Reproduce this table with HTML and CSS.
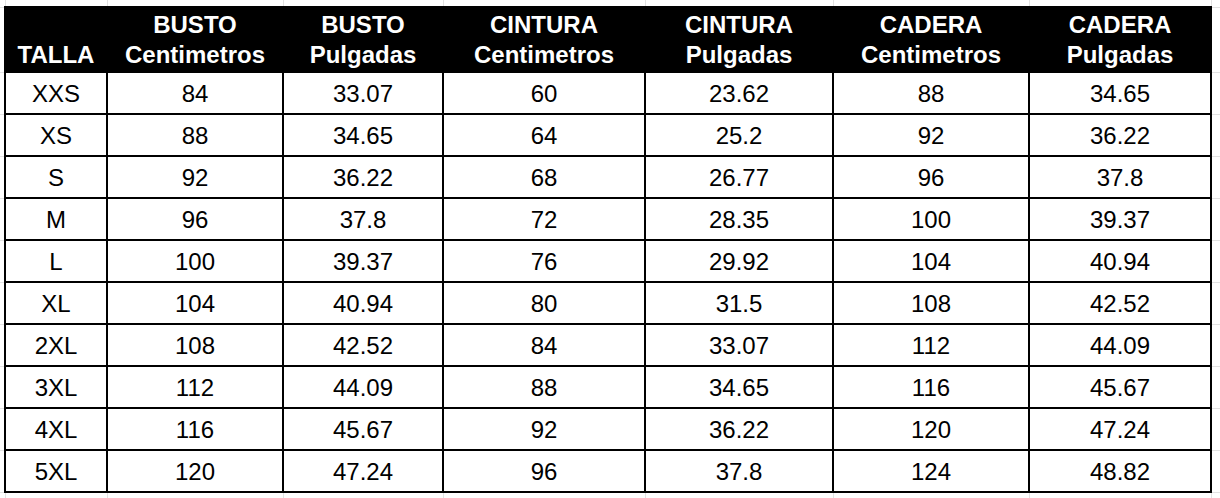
FILE: index.html
```html
<!DOCTYPE html>
<html lang="es">
<head>
<meta charset="utf-8">
<title>Tabla de tallas</title>
<link rel="stylesheet" href="styles.css">
</head>
<body>
<table class="sheet">
  <colgroup>
    <col class="w-gl">
    <col class="w-talla">
    <col class="w-bc">
    <col class="w-bp">
    <col class="w-cc">
    <col class="w-cp">
    <col class="w-hc">
    <col class="w-hp">
    <col class="w-gr">
  </colgroup>
  <tbody>
    <tr class="r-top"><td></td><td></td><td></td><td></td><td></td><td></td><td></td><td></td><td></td></tr>
    <tr class="r-head">
      <td></td>
      <th class="c">TALLA</th>
      <th class="c">BUSTO<br>Centimetros</th>
      <th class="c">BUSTO<br>Pulgadas</th>
      <th class="c">CINTURA<br>Centimetros</th>
      <th class="c">CINTURA<br>Pulgadas</th>
      <th class="c">CADERA<br>Centimetros</th>
      <th class="c">CADERA<br>Pulgadas</th>
      <td></td>
    </tr>
    <tr class="r-data"><td></td><td class="c">XXS</td><td class="c">84</td><td class="c">33.07</td><td class="c">60</td><td class="c">23.62</td><td class="c">88</td><td class="c">34.65</td><td></td></tr>
    <tr class="r-data"><td></td><td class="c">XS</td><td class="c">88</td><td class="c">34.65</td><td class="c">64</td><td class="c">25.2</td><td class="c">92</td><td class="c">36.22</td><td></td></tr>
    <tr class="r-data"><td></td><td class="c">S</td><td class="c">92</td><td class="c">36.22</td><td class="c">68</td><td class="c">26.77</td><td class="c">96</td><td class="c">37.8</td><td></td></tr>
    <tr class="r-data"><td></td><td class="c">M</td><td class="c">96</td><td class="c">37.8</td><td class="c">72</td><td class="c">28.35</td><td class="c">100</td><td class="c">39.37</td><td></td></tr>
    <tr class="r-data"><td></td><td class="c">L</td><td class="c">100</td><td class="c">39.37</td><td class="c">76</td><td class="c">29.92</td><td class="c">104</td><td class="c">40.94</td><td></td></tr>
    <tr class="r-data"><td></td><td class="c">XL</td><td class="c">104</td><td class="c">40.94</td><td class="c">80</td><td class="c">31.5</td><td class="c">108</td><td class="c">42.52</td><td></td></tr>
    <tr class="r-data"><td></td><td class="c">2XL</td><td class="c">108</td><td class="c">42.52</td><td class="c">84</td><td class="c">33.07</td><td class="c">112</td><td class="c">44.09</td><td></td></tr>
    <tr class="r-data"><td></td><td class="c">3XL</td><td class="c">112</td><td class="c">44.09</td><td class="c">88</td><td class="c">34.65</td><td class="c">116</td><td class="c">45.67</td><td></td></tr>
    <tr class="r-data"><td></td><td class="c">4XL</td><td class="c">116</td><td class="c">45.67</td><td class="c">92</td><td class="c">36.22</td><td class="c">120</td><td class="c">47.24</td><td></td></tr>
    <tr class="r-data"><td></td><td class="c">5XL</td><td class="c">120</td><td class="c">47.24</td><td class="c">96</td><td class="c">37.8</td><td class="c">124</td><td class="c">48.82</td><td></td></tr>
    <tr class="r-bot"><td></td><td></td><td></td><td></td><td></td><td></td><td></td><td></td><td></td></tr>
  </tbody>
</table>
</body>
</html>
```

FILE: styles.css
```css
html, body {
  margin: 0;
  padding: 0;
  background: #ffffff;
}

body {
  font-family: "Liberation Sans", Arial, sans-serif;
  color: #000000;
  overflow: hidden;
}

.sheet {
  border-collapse: collapse;
  border-style: hidden;
  table-layout: fixed;
  width: 1220px;
}

.w-gl { width: 5px; }
.w-talla { width: 102px; }
.w-bc { width: 176px; }
.w-bp { width: 160px; }
.w-cc { width: 202px; }
.w-cp { width: 188px; }
.w-hc { width: 196px; }
.w-hp { width: 182px; }
.w-gr { width: 9px; }

.sheet td,
.sheet th {
  border: 1px solid #e2e2e2;
  padding: 0;
}

.sheet .c {
  border: 2px solid #000000;
  text-align: center;
}

.r-top { height: 7px; }
.r-head { height: 65px; }
.r-data { height: 42px; }
.r-bot { height: 6px; }

.r-head th {
  background: #000000;
  color: #ffffff;
  font-weight: bold;
  font-size: 24px;
  line-height: 30px;
  vertical-align: bottom;
  padding-bottom: 1px;
}

.r-data td.c {
  font-size: 24px;
  line-height: 28px;
  vertical-align: middle;
  padding-top: 2px;
}
```
